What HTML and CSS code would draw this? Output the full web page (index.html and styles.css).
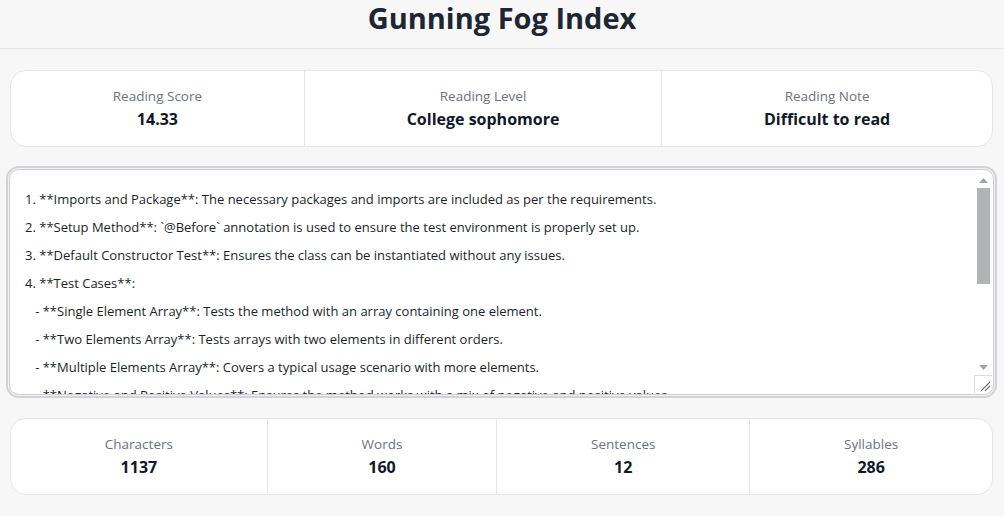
FILE: index.html
```html
<!DOCTYPE html>
<html lang="en">
<head>
<meta charset="utf-8">
<title>Gunning Fog Index</title>
<link rel="stylesheet" href="styles.css">
</head>
<body>
<header class="header">
  <h1 class="title">Gunning Fog Index</h1>
</header>
<main class="main">
  <section class="card">
    <div class="stat"><div class="stat-label">Reading Score</div><div class="stat-value">14.33</div></div>
    <div class="stat"><div class="stat-label">Reading Level</div><div class="stat-value">College sophomore</div></div>
    <div class="stat"><div class="stat-label">Reading Note</div><div class="stat-value">Difficult to read</div></div>
  </section>
  <div class="editor-wrap">
    <textarea class="editor" spellcheck="false">1. **Imports and Package**: The necessary packages and imports are included as per the requirements.
2. **Setup Method**: `@Before` annotation is used to ensure the test environment is properly set up.
3. **Default Constructor Test**: Ensures the class can be instantiated without any issues.
4. **Test Cases**:
   - **Single Element Array**: Tests the method with an array containing one element.
   - **Two Elements Array**: Tests arrays with two elements in different orders.
   - **Multiple Elements Array**: Covers a typical usage scenario with more elements.
   - **Negative and Positive Values**: Ensures the method works with a mix of negative and positive values.
   - **Duplicate Values**: Checks that duplicate values are handled correctly.
   - **Empty Array**: Ensures the method handles an empty array gracefully.
   - **Null Array**: Verifies that a null input is handled without errors.
   - **Already Sorted Array**: Confirms the method works on arrays that are already sorted.
   - **Reverse Sorted Array**: Tests the worst-case input ordering.
5. **Assertions**: Each test uses assertions to compare the actual output with the expected result.
6. **Edge Cases**: Boundary conditions are covered to make the test suite robust.</textarea>
    <div class="scrollbar" aria-hidden="true">
      <svg class="arrow" width="9" height="5" viewBox="0 0 9 5"><polygon points="0,5 9,5 4.5,0" fill="#a5a5a8"/></svg>
      <div class="thumb"></div>
      <svg class="arrow arrow-down" width="9" height="5" viewBox="0 0 9 5"><polygon points="0,0 9,0 4.5,5" fill="#a5a5a8"/></svg>
    </div>
    <div class="resizer" aria-hidden="true">
      <svg width="10" height="10" viewBox="0 0 10 10"><path d="M1 10 L10 1 M5 10 L10 5" stroke="#6e6e72" stroke-width="1.1" fill="none"/></svg>
    </div>
  </div>
  <section class="card card-bottom">
    <div class="stat"><div class="stat-label">Characters</div><div class="stat-value">1137</div></div>
    <div class="stat"><div class="stat-label">Words</div><div class="stat-value">160</div></div>
    <div class="stat"><div class="stat-label">Sentences</div><div class="stat-value">12</div></div>
    <div class="stat"><div class="stat-label">Syllables</div><div class="stat-value">286</div></div>
  </section>
</main>
</body>
</html>
```
FILE: styles.css
```css
* { box-sizing: border-box; }
html, body { margin: 0; padding: 0; }
body {
  background: #f7f7f7;
  font-family: "Segoe UI", "Open Sans", "Noto Sans", sans-serif;
  color: #1f2937;
  height: 516px;
  overflow: hidden;
}
.header {
  height: 49px;
  border-bottom: 1px solid #e4e4e4;
  display: flex;
  align-items: center;
  justify-content: center;
}
.title {
  margin: 0;
  font-size: 29px;
  font-weight: 700;
  line-height: 36px;
  color: #1e2533;
  padding-bottom: 12px;
}
.main {
  display: flex;
  flex-direction: column;
  gap: 22px;
  padding: 21px 11px 0 10px;
}
.card {
  display: flex;
  background: #fff;
  border: 1px solid #e6e6e6;
  border-radius: 16px;
  overflow: hidden;
}
.card-bottom { margin-top: 1px; }
.stat {
  flex: 1 1 auto;
  text-align: center;
  padding: 15px 12px 16px;
  border-left: 1px solid #e6e6e6;
}
.stat:first-child { border-left: none; }
.stat-label {
  font-size: 13.5px;
  line-height: 20px;
  color: #6b7280;
}
.stat-value {
  font-size: 16px;
  line-height: 22px;
  font-weight: 700;
  color: #111827;
  margin-top: 2px;
}
.editor-wrap {
  position: relative;
  width: 985px;
  margin-left: -1px;
}
.editor {
  display: block;
  width: 985px;
  height: 226px;
  padding: 14.5px 30px 0 15px;
  font-family: "Segoe UI", "Open Sans", "Noto Sans", sans-serif;
  font-size: 13px;
  line-height: 28px;
  color: #1a1f2b;
  background: #fff;
  border: 1px solid #cfcfd4;
  border-radius: 10px;
  box-shadow: 0 0 0 1px #f1f1f3, 0 0 0 3px #d2d2d7;
  outline: none;
  resize: none;
  white-space: pre;
  overflow: hidden;
}
.scrollbar {
  position: absolute;
  top: 3px;
  right: 2px;
  width: 17px;
  height: 203px;
  display: flex;
  flex-direction: column;
  align-items: center;
  pointer-events: none;
}
.arrow { margin-top: 6px; flex: none; }
.arrow-down { margin-top: auto; margin-bottom: 5px; }
.thumb {
  width: 13px;
  height: 96px;
  margin-top: 5px;
  background: #b1b3b7;
}
.resizer {
  position: absolute;
  right: 2px;
  bottom: 2px;
  width: 18px;
  height: 18px;
  border-top: 1px solid #dcdcdf;
  border-left: 1px solid #dcdcdf;
  background: #fff;
  border-bottom-right-radius: 8px;
  display: flex;
  align-items: flex-end;
  justify-content: flex-end;
  padding: 0 2px 2px 0;
  pointer-events: none;
}
.resizer svg { display: block; }
```
